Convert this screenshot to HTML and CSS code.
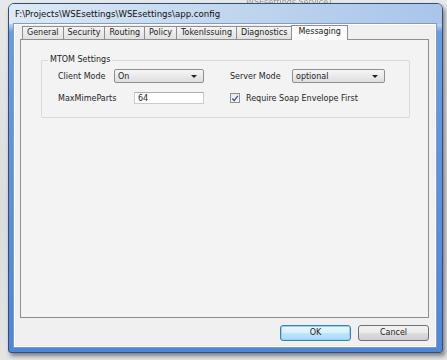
FILE: index.html
```html
<!DOCTYPE html>
<html>
<head>
<meta charset="utf-8">
<link rel="stylesheet" href="styles.css">
</head>
<body>
<div class="backdrop">
  <div class="behind">WSEsettings Service1</div>
  <div class="window">
    <div class="titlebar">F:\Projects\WSEsettings\WSEsettings\app.config</div>
    <div class="client">
      <div class="tabs">
        <div class="tab">General</div>
        <div class="tab">Security</div>
        <div class="tab">Routing</div>
        <div class="tab">Policy</div>
        <div class="tab">TokenIssuing</div>
        <div class="tab">Diagnostics</div>
        <div class="tab active">Messaging</div>
      </div>
      <div class="panel">
        <div class="group">
          <div class="legend">MTOM Settings</div>
          <div class="grid">
            <div class="field">
              <span class="label">Client Mode</span>
              <div class="combo combo-client"><span>On</span><span class="arrow"></span></div>
            </div>
            <div class="field">
              <span class="label">Server Mode</span>
              <div class="combo combo-server"><span>optional</span><span class="arrow"></span></div>
            </div>
            <div class="field">
              <span class="label label-wide">MaxMimeParts</span>
              <div class="textbox">64</div>
            </div>
            <div class="field">
              <span class="check">
                <svg width="9" height="9" viewBox="0 0 9 9"><path d="M1.5 4.5 L3.6 7 L7.6 1.6" fill="none" stroke="#3b4f8c" stroke-width="1.4"/></svg>
              </span>
              <span class="checklabel">Require Soap Envelope First</span>
            </div>
          </div>
        </div>
      </div>
      <div class="buttons">
        <div class="btn default">OK</div>
        <div class="btn">Cancel</div>
      </div>
    </div>
  </div>
</div>
</body>
</html>
```

FILE: styles.css
```css
html, body {
  margin: 0;
  padding: 0;
}
body {
  width: 447px;
  height: 360px;
  overflow: hidden;
  font-family: "DejaVu Sans", Verdana, sans-serif;
  font-size: 8px;
  color: #1e1e1e;
}
.backdrop {
  position: relative;
  width: 447px;
  height: 360px;
  background: linear-gradient(to bottom, #e8e8e8 0%, #dcdcdc 60%, #e4e4e4 100%);
  padding: 3px 0 0 8px;
  box-sizing: border-box;
}
.behind {
  position: absolute;
  z-index: 0;
  left: 246px;
  top: -1px;
  font-size: 8px;
  line-height: 8px;
  color: #a09a90;
  filter: blur(0.5px);
}
.window {
  position: relative;
  z-index: 1;
  width: 435px;
  height: 350px;
  box-sizing: border-box;
  padding: 0 6px 5px 5px;
  border: 1px solid #2f4f7e;
  border-radius: 6px 6px 3px 3px;
  background: linear-gradient(to bottom, #c9dcf1 0%, #b9d0ec 6%, #6a9be0 8%, #4f86d8 100%);
  box-shadow: 2px 3px 4px rgba(0,0,0,0.45);
  display: flex;
  flex-direction: column;
}
.titlebar {
  height: 20px;
  line-height: 20px;
  font-size: 8.6px;
  color: #101010;
  background: linear-gradient(to right, #dde9f6 0%, #c4d8ef 45%, #a9c5ea 100%);
  margin: 0 -6px 0 -5px;
  padding-left: 6px;
  border-radius: 5px 5px 0 0;
}
.client {
  flex: 1;
  background: #f0f0f0;
  border: 1px solid #ffffff;
  outline: 1px solid #7e9cc9;
  display: flex;
  flex-direction: column;
  padding: 1px 6px 0 5px;
}
.tabs {
  display: flex;
  align-items: flex-end;
  height: 13px;
  padding-left: 2px;
}
.tab {
  height: 12px;
  line-height: 12px;
  padding: 0 4px;
  border: 1px solid #8c8e94;
  border-bottom: none;
  background: linear-gradient(to bottom, #f4f4f4, #e1e1e1);
  margin-right: -1px;
  font-size: 8px;
  color: #222;
}
.tab.active {
  height: 14px;
  background: #fbfbfb;
  position: relative;
  z-index: 2;
  margin-bottom: -1px;
  padding: 0 6px;
}
.panel {
  height: 279px;
  border: 1px solid #8c8e94;
  background: #f3f3f3;
  box-sizing: border-box;
  padding: 20px 18px 0 20px;
}
.group {
  position: relative;
  border: 1px solid #dadada;
  border-radius: 2px;
  height: 58px;
  box-sizing: border-box;
  padding: 8px 0 0 16px;
}
.legend {
  position: absolute;
  left: 6px;
  top: -6px;
  padding: 0 2px;
  background: #f3f3f3;
  color: #222;
}
.grid {
  display: grid;
  grid-template-columns: 172px 1fr;
  row-gap: 8px;
}
.field {
  display: flex;
  align-items: center;
  height: 14px;
}
.label {
  width: 56px;
}
.label-wide {
  width: 76px;
}
.combo {
  height: 14px;
  box-sizing: border-box;
  border: 1px solid #8e8f8f;
  border-radius: 2px;
  background: linear-gradient(to bottom, #f6f6f6, #dedede);
  display: flex;
  align-items: center;
  justify-content: space-between;
  padding: 0 6px 0 3px;
}
.combo-client { width: 90px; }
.combo-server { width: 93px; margin-left: 6px; }
.arrow {
  width: 0;
  height: 0;
  border-left: 3px solid transparent;
  border-right: 3px solid transparent;
  border-top: 3px solid #222;
}
.textbox {
  width: 70px;
  height: 12px;
  line-height: 12px;
  box-sizing: border-box;
  border: 1px solid #c9cbcf;
  border-top-color: #abadb3;
  background: #fff;
  padding-left: 3px;
}
.check {
  width: 10px;
  height: 10px;
  box-sizing: border-box;
  border: 1px solid #8f8f8f;
  background: linear-gradient(to bottom, #e8e8e8, #fafafa);
  display: flex;
  align-items: center;
  justify-content: center;
  margin-right: 6px;
}
.buttons {
  display: flex;
  justify-content: flex-end;
  gap: 7px;
  margin-top: 7px;
}
.btn {
  width: 71px;
  height: 16px;
  line-height: 14px;
  box-sizing: border-box;
  text-align: center;
  border: 1px solid #707070;
  border-radius: 3px;
  background: linear-gradient(to bottom, #f2f2f2 0%, #ebebeb 50%, #dddddd 51%, #cfcfcf 100%);
  color: #222;
}
.btn.default {
  border-color: #3c7fb1;
  box-shadow: inset 0 0 0 1px #8fd3f5;
  background: linear-gradient(to bottom, #eaf6fd 0%, #d9f0fc 50%, #bee6fd 51%, #a7d9f5 100%);
}
```
